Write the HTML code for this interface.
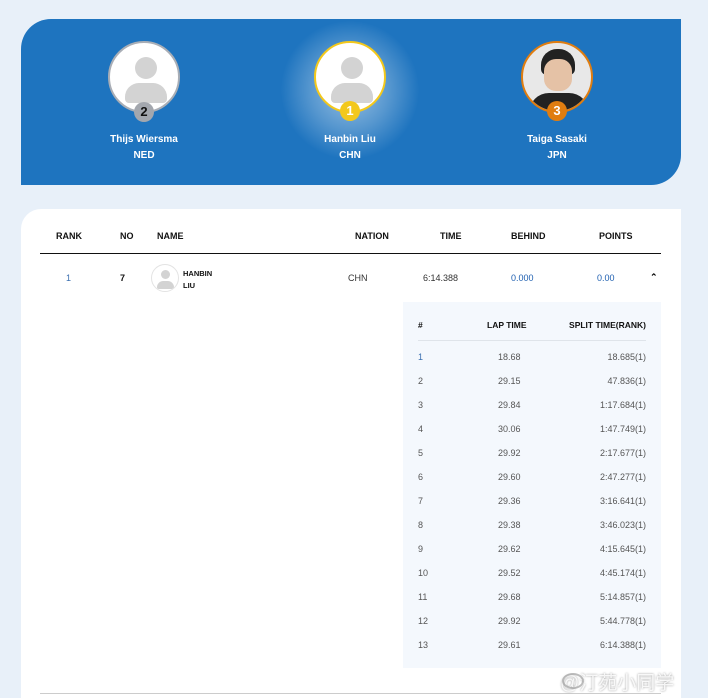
<!DOCTYPE html>
<html><head><meta charset="utf-8"><style>
*{margin:0;padding:0;box-sizing:border-box}
body{width:708px;height:698px;background:#e8f0f9;font-family:"Liberation Sans",sans-serif;position:relative;overflow:hidden}
.a{position:absolute}
.blue{left:21px;top:19px;width:660px;height:166px;background:#1e74bf;border-radius:30px 0 30px 0}
.av{width:72px;height:72px;border-radius:50%;background:#fff;overflow:hidden}
.av .h{position:absolute;left:25px;top:14px;width:22px;height:22px;border-radius:50%;background:#d3d3d3}
.av .b{position:absolute;left:15px;top:40px;width:42px;height:20px;border-radius:14px 14px 4px 4px;background:#d3d3d3}
.badge{width:20px;height:20px;border-radius:50%;font-weight:bold;font-size:13px;text-align:center;line-height:20px}
.nm{color:#fff;font-weight:bold;font-size:10px;text-align:center;width:140px}
.white{left:21px;top:209px;width:660px;height:489px;background:#fff;border-radius:20px 0 0 0}
.th{font-size:9px;font-weight:bold;color:#111;top:231px}
.td{font-size:9px;top:273px;color:#333}
.lap{left:403px;top:302px;width:258px;height:366px;background:#f4f8fd}
.lr{position:absolute;left:15px;width:228px;font-size:9px;color:#555;height:12px}
.lr span{position:absolute}
</style></head><body>
<div class="a blue"></div>
<div class="a" style="left:280px;top:20px;width:140px;height:140px;border-radius:50%;background:radial-gradient(circle,rgba(255,255,255,.55) 0,rgba(255,255,255,.25) 40%,rgba(30,116,191,0) 70%)"></div>
<!-- 2 -->
<div class="a av" style="left:108px;top:41px;border:2px solid #a9aeb6"><div class="h"></div><div class="b"></div></div>
<div class="a badge" style="left:134px;top:102px;background:#a3a7ae;color:#111">2</div>
<div class="a nm" style="left:74px;top:134px">Thijs Wiersma</div>
<div class="a nm" style="left:74px;top:150px">NED</div>
<!-- 1 -->
<div class="a av" style="left:314px;top:41px;border:2px solid #f3c81b"><div class="h"></div><div class="b"></div></div>
<div class="a badge" style="left:340px;top:101px;background:#f3c81b;color:#fff">1</div>
<div class="a nm" style="left:280px;top:134px">Hanbin Liu</div>
<div class="a nm" style="left:280px;top:150px">CHN</div>
<!-- 3 -->
<div class="a av" style="left:521px;top:41px;border:2px solid #e07d10;background:#e8e8e8">
<div style="position:absolute;left:18px;top:6px;width:34px;height:26px;border-radius:16px 16px 6px 6px;background:#222"></div>
<div style="position:absolute;left:21px;top:16px;width:28px;height:32px;border-radius:12px;background:#e5c2a6"></div>
<div style="position:absolute;left:6px;top:50px;width:60px;height:30px;border-radius:20px 20px 0 0;background:#222"></div></div>
<div class="a badge" style="left:547px;top:101px;background:#e07d10;color:#fff">3</div>
<div class="a nm" style="left:487px;top:134px">Taiga Sasaki</div>
<div class="a nm" style="left:487px;top:150px">JPN</div>

<div class="a white"></div>
<div class="a th" style="left:56px">RANK</div>
<div class="a th" style="left:120px">NO</div>
<div class="a th" style="left:157px">NAME</div>
<div class="a th" style="left:355px">NATION</div>
<div class="a th" style="left:440px">TIME</div>
<div class="a th" style="left:511px">BEHIND</div>
<div class="a th" style="left:599px">POINTS</div>
<div class="a" style="left:40px;top:253px;width:621px;height:1px;background:#111"></div>
<div class="a td" style="left:66px;color:#3b6fb0">1</div>
<div class="a td" style="left:120px;font-weight:bold;color:#111">7</div>
<div class="a av" style="left:151px;top:264px;width:28px;height:28px;border:1px solid #e3e3e3"><div class="h" style="left:9px;top:5px;width:9px;height:9px"></div><div class="b" style="left:5px;top:16px;width:17px;height:8px"></div></div>
<div class="a" style="left:183px;top:268px;font-size:7.5px;font-weight:bold;line-height:12px;color:#111">HANBIN<br>LIU</div>
<div class="a td" style="left:348px">CHN</div>
<div class="a td" style="left:423px">6:14.388</div>
<div class="a td" style="left:511px;color:#1e5fb0">0.000</div>
<div class="a td" style="left:597px;color:#1e5fb0">0.00</div>
<div class="a" style="left:650px;top:272px;font-size:9px;font-weight:bold">&#8963;</div>

<div class="a lap">
<div class="lr" style="top:18px;font-weight:bold;color:#111;font-size:8.5px"><span style="left:0">#</span><span style="left:69px">LAP TIME</span><span style="right:0">SPLIT TIME(RANK)</span></div>
<div style="position:absolute;left:15px;top:38px;width:228px;height:1px;background:#dfe4ea"></div>
<div class="lr" style="top:50px"><span style="left:0;color:#3b6fb0">1</span><span style="left:80px">18.68</span><span style="right:0">18.685(1)</span></div>
<div class="lr" style="top:74px"><span style="left:0">2</span><span style="left:80px">29.15</span><span style="right:0">47.836(1)</span></div>
<div class="lr" style="top:98px"><span style="left:0">3</span><span style="left:80px">29.84</span><span style="right:0">1:17.684(1)</span></div>
<div class="lr" style="top:122px"><span style="left:0">4</span><span style="left:80px">30.06</span><span style="right:0">1:47.749(1)</span></div>
<div class="lr" style="top:146px"><span style="left:0">5</span><span style="left:80px">29.92</span><span style="right:0">2:17.677(1)</span></div>
<div class="lr" style="top:170px"><span style="left:0">6</span><span style="left:80px">29.60</span><span style="right:0">2:47.277(1)</span></div>
<div class="lr" style="top:194px"><span style="left:0">7</span><span style="left:80px">29.36</span><span style="right:0">3:16.641(1)</span></div>
<div class="lr" style="top:218px"><span style="left:0">8</span><span style="left:80px">29.38</span><span style="right:0">3:46.023(1)</span></div>
<div class="lr" style="top:242px"><span style="left:0">9</span><span style="left:80px">29.62</span><span style="right:0">4:15.645(1)</span></div>
<div class="lr" style="top:266px"><span style="left:0">10</span><span style="left:80px">29.52</span><span style="right:0">4:45.174(1)</span></div>
<div class="lr" style="top:290px"><span style="left:0">11</span><span style="left:80px">29.68</span><span style="right:0">5:14.857(1)</span></div>
<div class="lr" style="top:314px"><span style="left:0">12</span><span style="left:80px">29.92</span><span style="right:0">5:44.778(1)</span></div>
<div class="lr" style="top:338px"><span style="left:0">13</span><span style="left:80px">29.61</span><span style="right:0">6:14.388(1)</span></div>
</div>
<div class="a" style="left:40px;top:693px;width:621px;height:1px;background:#ccc"></div>
<div class="a" style="left:560px;top:668px;font-size:19px;color:rgba(255,255,255,.85);text-shadow:0 0 2px #999;font-family:'Liberation Sans','Noto Sans CJK SC',sans-serif">@汀苑小同学</div>
<div class="a" style="left:562px;top:673px;width:22px;height:16px;border:2px solid rgba(160,160,160,.7);border-radius:50%"></div>
</body></html>
